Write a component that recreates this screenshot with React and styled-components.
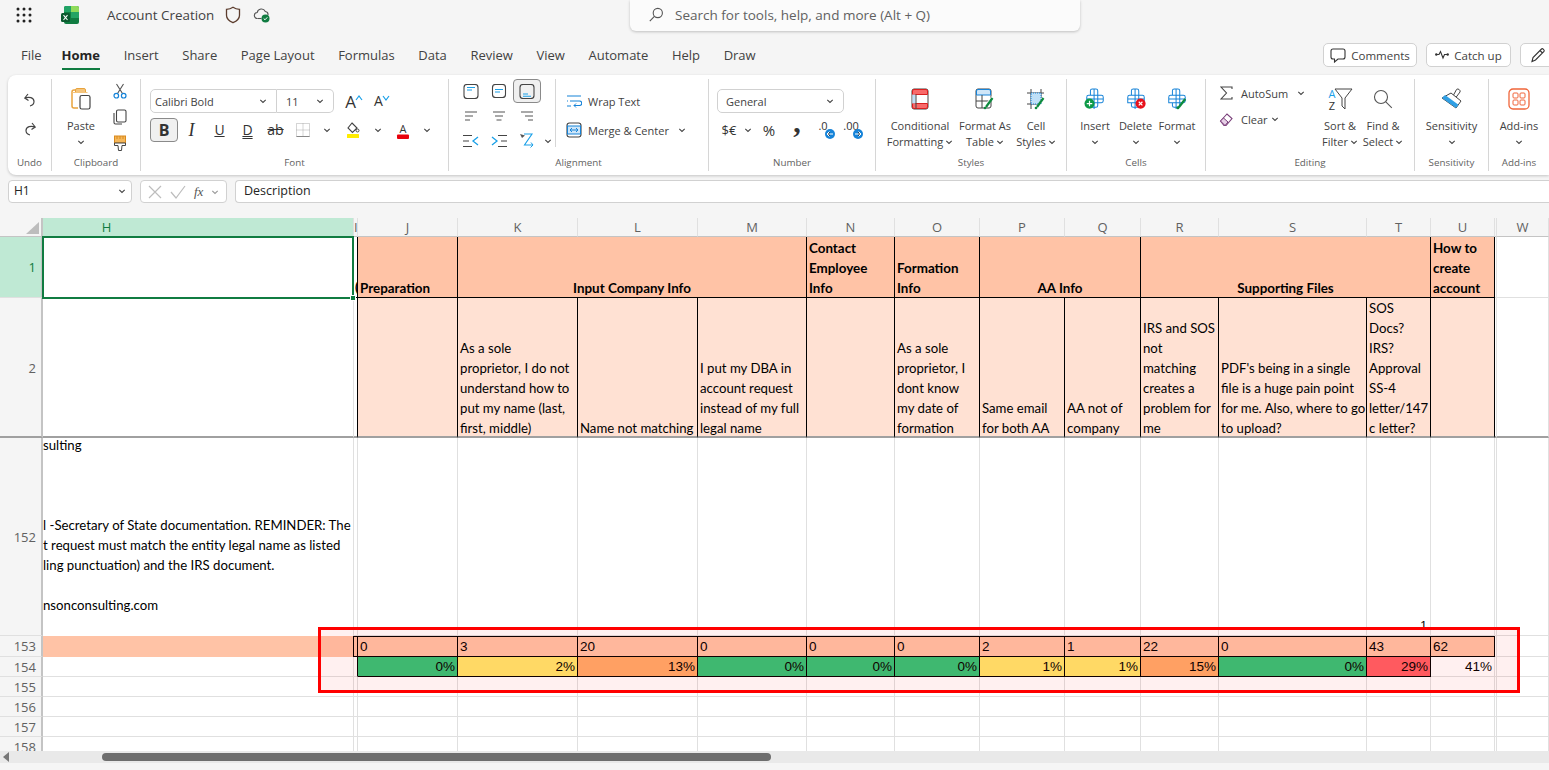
import React from "react";
import styled, { createGlobalStyle } from "styled-components";

const Global = createGlobalStyle`
  html, body { margin: 0; padding: 0; background: #f5f5f5; }
  * { box-sizing: border-box; }
`;
const UI = `"Open Sans", "Noto Sans", sans-serif`;
const SHEET = `"Lato", "Noto Sans", sans-serif`;
const NUM = `"Liberation Sans", Arial, sans-serif`;

const Page = styled.div`
  width: 1549px; height: 770px; overflow: hidden; background: #f5f5f5;
  font-family: ${UI}; color: #424242; display: flex; flex-direction: column;
`;
/* ---------- title bar ---------- */
const TitleBar = styled.header`display: flex; height: 40px; flex: none;`;
const TitleLeft = styled.div`width: 630px; height: 30px; display: flex; align-items: center; padding-left: 16px;`;
const DocName = styled.span`font-size: 13.4px; margin: 0 11px 0 27px; color: #424242; white-space: nowrap;`;
const SearchBox = styled.div`
  width: 450px; height: 31px; background: #fbfbfb; border-radius: 0 0 6px 6px;
  box-shadow: 0 1px 3px rgba(0,0,0,.22); display: flex; align-items: center; padding: 0 0 2px 18px; gap: 11px;
  font-size: 13.5px; color: #616161; white-space: nowrap;
`;
/* ---------- tabs ---------- */
const TabBar = styled.nav`height: 35px; flex: none; display: flex; align-items: flex-start; padding: 3px 38px 0 21px; position: relative;`;
const Tab = styled.div`
  font-size: 13px; line-height: 24px; height: 27px; margin-right: ${p => p.$tight ? 20 : 23.6}px; color: ${p => p.$on ? "#242424" : "#424242"};
  font-weight: ${p => p.$on ? 700 : 400}; border-bottom: ${p => p.$on ? "2px solid #107c41" : "none"}; white-space: nowrap;
`;
const TabActions = styled.div`display: flex; gap: 9px; width: 226px; flex: none; position: absolute; left: 1323px; top: 3px;`;
const PillButton = styled.div`
  height: 24px; flex: none; width: ${p => p.$w}px; background: #fff; border: 1px solid #d1d1d1; border-radius: 5px;
  display: flex; align-items: center; justify-content: ${p => p.$left ? "flex-start" : "center"}; padding-left: ${p => p.$left ? "9px" : "0"}; gap: 5px; font-size: 11.5px; color: #424242;
`;
/* ---------- ribbon ---------- */
const Ribbon = styled.div`
  height: 100px; flex: none; margin-left: 8px; background: #fff; border-radius: 8px 0 0 8px;
  box-shadow: 0 1px 3px rgba(0,0,0,.2); display: flex; overflow: hidden;
`;
const Group = styled.section`
  width: ${p => p.$w}px; flex: none; height: 92px; margin: 4px 0; display: flex; flex-direction: column;
  border-right: ${p => p.$end ? "none" : "1px solid #d6d6d6"};
`;
const GroupBody = styled.div`height: 74px; flex: none; display: flex; padding-left: ${p => p.$pl || 0}px;`;
const GroupLabel = styled.div`height: 18px; line-height: 19px; font-size: 9.8px; text-align: center; color: #616161;`;
const Stack = styled.div`display: flex; flex-direction: column; align-items: center; width: ${p => p.$w ? p.$w + "px" : "100%"}; padding-top: ${p => p.$pt || 0}px; gap: ${p => p.$gap || 0}px; flex: none;`;
const LeftStack = styled(Stack)`align-items: flex-start; margin-left: ${p => p.$ml || 0}px;`;
const Slot = styled.div`
  width: ${p => p.$w || 24}px; height: ${p => p.$h || 24}px; flex: none; display: flex; align-items: center; justify-content: center; gap: ${p => p.$gap || 0}px;
  border: ${p => p.$on ? "1px solid #8a8a8a" : "1px solid transparent"}; border-radius: 4px; background: ${p => p.$on ? "#f0f0f0" : "transparent"};
`;
const Row = styled.div`display: flex; align-items: center; height: 24px; flex: none; margin-top: ${p => p.$mt || 0}px; margin-left: ${p => p.$ml || 0}px;`;
const SmallText = styled.span`font-size: 11px; color: #424242; white-space: nowrap; margin: 0 ${p => p.$mr || 0}px 0 ${p => p.$ml || 0}px;`;
const Big = styled.div`width: ${p => p.$w}px; flex: none; display: flex; flex-direction: column; align-items: center;`;
const BigIcon = styled.div`height: 39px; display: flex; align-items: center; justify-content: center;`;
const BigLabel = styled.div`font-size: 11px; line-height: 16px; text-align: center; white-space: nowrap; color: #424242; display: flex; align-items: center; justify-content: center; gap: 2px; height: 16px;`;
const Combo = styled.div`
  height: 24px; border: 1px solid #d1d1d1; border-left: ${p => p.$joined ? "none" : "1px solid #d1d1d1"}; border-radius: ${p => p.$r || "5px"}; background: #fff; width: ${p => p.$w}px; flex: none;
  display: flex; align-items: center; justify-content: space-between; padding: 0 9px 0 ${p => p.$pl || 4}px; font-size: 11px; color: #424242;
`;
const FontLetter = styled.span`
  font-family: ${p => p.$serif ? `"Liberation Serif", serif` : UI}; font-size: ${p => p.$s || 14}px; font-weight: ${p => p.$b ? 700 : 400}; font-style: ${p => p.$i ? "italic" : "normal"};
  text-decoration: ${p => p.$d || "none"}; color: #333; line-height: 1; padding-bottom: ${p => p.$lift || 0}px;
`;
const CaretTop = styled.span`align-self: flex-start; margin-top: 5px; margin-left: -1px;`;
const AlignGrid = styled.div`
  display: grid; grid-template-columns: 28px 28px 28px 14px; grid-auto-rows: 24px; row-gap: 1px; align-items: center; justify-items: center;
  height: 68px; border-right: 1px solid #d6d6d6; width: 99px; flex: none;
`;
/* ---------- formula bar ---------- */
const FormulaBar = styled.div`height: 23px; flex: none; margin: 5px 0 15px 8px; display: flex; gap: 8px;`;
const NameBox = styled.div`
  width: 124px; flex: none; background: #fff; border: 1px solid #d1d1d1; border-radius: 4px; font-size: 12px; padding: 0 5px 2px; display: flex; align-items: center; justify-content: space-between; color: #242424;
`;
const FxBox = styled.div`width: 87px; flex: none; background: #fff; border: 1px solid #d1d1d1; border-radius: 4px; display: flex; align-items: center; padding-left: 7px; gap: 8px;`;
const FormulaInput = styled.div`flex: 1; background: #fff; border: 1px solid #d1d1d1; border-right: none; border-radius: 4px 0 0 4px; font-size: 12.5px; padding: 0 0 2px 8px; display: flex; align-items: center; color: #242424;`;
/* ---------- sheet ---------- */
const SheetWrap = styled.div`position: relative; height: 533px; overflow: hidden; background: #fff; flex: none;`;
const Sheet = styled.div`
  display: grid;
  grid-template-columns: 43px 311px 4px 100px 120px 120px 109px 88px 85px 85px 76px 78px 148px 64px 64px 2px 52px;
  grid-template-rows: 19px 61px 140px 198px 21px 20px 20px 20px 20px 20px;
  font-family: ${SHEET}; color: #000;
`;
const Corner = styled.div`background: #f5f5f5; border-right: 2px solid #c4c4c4; border-bottom: 1px solid #c4c4c4; display: flex; align-items: flex-end; justify-content: flex-end; padding: 0 2px 2px 0;`;
const ColHead = styled.div`
  background: ${p => p.$on ? "#bfe9d4" : "#f5f5f5"}; color: ${p => p.$on ? "#107c41" : "#616161"}; border-right: 1px solid #e0e0e0; border-bottom: 1px solid #c4c4c4;
  font: 13px/18px ${UI}; text-align: center; overflow: hidden; padding-right: ${p => p.$pr || 0}px;
`;
const RowHead = styled.div`
  background: ${p => p.$on ? "#bfe9d4" : "#f5f5f5"}; color: ${p => p.$on ? "#107c41" : "#616161"}; border-right: 2px solid #c4c4c4;
  border-bottom: ${p => p.$freeze ? "2px solid #a0a0a0" : "1px solid #e0e0e0"}; font: 13px/1 ${UI};
  display: flex; align-items: center; justify-content: flex-end; padding: ${p => p.$freeze ? 2 : 1}px 5px 0 0; overflow: visible;
`;
const Blank = styled.div`
  background: ${p => p.$bg || "#fff"}; border-right: 1px solid ${p => p.$ink ? "#000" : "#e0e0e0"};
  border-bottom: ${p => p.$freeze ? "2px solid #a0a0a0" : "1px solid #e0e0e0"};
  display: flex; align-items: ${p => p.$end ? "flex-end" : "stretch"}; justify-content: flex-end; overflow: hidden;
`;
const Clipped = styled(Blank)`
  justify-content: flex-start; align-items: flex-end; font: 700 13.4px/20px ${SHEET};
  border-bottom-color: #000; padding-left: 1px;
`;
const Selected = styled.div`
  position: relative; z-index: 2; margin: -1px 0 -1px -1px; background: #fff; border: 2px solid #107c41;
`;
const Handle = styled.i`position: absolute; right: -4px; bottom: -4px; background: #107c41; border: 1px solid #fff; box-sizing: content-box; width: 4px; height: 4px;`;
const GroupHead = styled.div`
  grid-column: span ${p => p.$span || 1}; background: #ffc3a6; border-right: 1.6px solid #000; border-bottom: 1.6px solid #000;
  display: flex; flex-direction: column; justify-content: flex-end; padding: 0 2px 0; font: 700 13.4px/20px ${SHEET}; text-align: ${p => p.$c ? "center" : "left"}; white-space: nowrap; overflow: hidden;
`;
const Story = styled.div`
  background: #ffe1d3; border-right: 1.6px solid #000; border-bottom: 2px solid #a0a0a0;
  display: flex; flex-direction: column; justify-content: flex-end; padding: 0 2px; font: 400 13.2px/20px ${SHEET}; white-space: nowrap; overflow: hidden;
`;
const LineStack = styled.div`margin-bottom: ${p => p.$mb || 0}px;`;
const NoteCell = styled.div`
  background: #fff; border-right: 1px solid #e0e0e0; padding: 0 0 0 0; overflow: hidden;
`;
const NoteText = styled.div`font: 400 13.2px/20px ${SHEET}; white-space: pre; margin-top: -3px;`;
const Stray = styled.div`font: 400 12px/14px ${NUM}; padding: 0 3px 2px 0;`;
const Band = styled.div`background: #ffc3a6; border-bottom: 1px solid #ffc3a6;`;
const Count = styled.div`
  background: #ffc3a6; border-top: 1px solid #000; border-right: 1px solid #000; border-bottom: 1px solid #000; border-left: ${p => p.$first ? "1px solid #000" : "none"};
  margin-left: ${p => p.$first ? -1 : 0}px; font: 400 13.5px/20px ${NUM}; padding-left: 2px; overflow: hidden;
`;
const Share = styled.div`
  background: ${p => p.$bg || "#fff"}; border-right: 1px solid ${p => p.$bg ? "#000" : "#e0e0e0"}; border-bottom: 1px solid ${p => p.$bg ? "#000" : "#e0e0e0"};
  font: 400 13.5px/20px ${NUM}; text-align: right; padding-right: 2px; overflow: hidden;
`;
const Highlight = styled.div`
  position: absolute; left: 318px; top: 409px; width: 1202px; height: 66px; border: 3px solid #f00; background: rgba(255,0,0,.06); z-index: 3;
`;
const ScrollBar = styled.div`height: 12px; flex: none; background: #e9e9e9; display: flex; align-items: center; padding-left: 3px;`;
const Thumb = styled.div`width: 669px; height: 8px; border-radius: 4px; background: #6e6e6e; margin-left: 93px;`;
const Spacer = styled.span`width: ${p => p.$w}px; flex: none;`;

/* ---------- icons ---------- */
const S = ({ w = 16, h = 16, vb, children, ...r }) => (
  <svg width={w} height={h} viewBox={vb || `0 0 ${w} ${h}`} fill="none" style={{ display: "block", flex: "none" }} {...r}>{children}</svg>
);
const Chev = ({ c = "#444" }) => <S w={8} h={8}><path d="M1.300 2.800 4 5.500 6.700 2.800" stroke={c} strokeWidth="1.100" /></S>;
const Waffle = () => <S w={16} h={16}>{[2, 8, 14].map(y => [2, 8, 14].map(x => <circle key={x + "-" + y} cx={x} cy={y} r="1.500" fill="#222" />))}</S>;
const ExcelLogo = () => (
  <S w={20} h={20}>
    <rect x="4" y="1" width="15" height="18" rx="2" fill="#107c41" />
    <path d="M11 1h6a2 2 0 0 1 2 2v4h-8z" fill="#8fdb5b" />
    <path d="M4 3a2 2 0 0 1 2-2h5v6H4z" fill="#21a366" />
    <path d="M11 7h8v6h-8z" fill="#33c481" opacity=".55" />
    <rect x="1" y="8" width="9" height="9" rx="1.500" fill="#0b5a2f" />
    <path d="M3.500 10.200 7.500 15M7.500 10.200 3.500 15" stroke="#fff" strokeWidth="1.100" />
  </S>
);
const ShieldIcon = () => <S w={16} h={18}><path d="M8 1.200c2 1.400 4.200 2 6.500 2.100v6c0 3.600-2.800 5.900-6.500 7.400-3.700-1.500-6.500-3.800-6.500-7.400v-6C3.800 3.200 6 2.600 8 1.200z" stroke="#5c3d2e" strokeWidth="1.300" /></S>;
const CloudOk = () => (
  <S w={18} h={16}>
    <path d="M4.500 11.500a3 3 0 0 1-.3-6A4.300 4.300 0 0 1 12.300 4.500 3.200 3.200 0 0 1 15 8" stroke="#555" strokeWidth="1.100" />
    <path d="M4.500 11.500h4" stroke="#555" strokeWidth="1.100" />
    <circle cx="12.500" cy="11.500" r="4" fill="#107c41" />
    <path d="m10.700 11.500 1.300 1.300 2.300-2.500" stroke="#fff" strokeWidth="1" />
  </S>
);
const SearchI = () => <S w={16} h={16}><circle cx="9.800" cy="6" r="4.600" stroke="#555" strokeWidth="1.100" /><path d="M6.400 9.400 1.800 14.200" stroke="#555" strokeWidth="1.100" /></S>;
const CommentI = () => <S w={16} h={16}><path d="M3 2h10a2 2 0 0 1 2 2v6a2 2 0 0 1-2 2H8l-3.500 3v-3H3a2 2 0 0 1-2-2V4a2 2 0 0 1 2-2z" stroke="#333" strokeWidth="1.100" /></S>;
const PulseI = () => <S w={14} h={12}><circle cx="1.300" cy="5.500" r="1.200" fill="#333" /><circle cx="12.700" cy="5.500" r="1.200" fill="#333" /><path d="M2 5.500h2l1.500-3 2.500 6.500 1.500-3.500H12" stroke="#333" strokeWidth="1.100" /></S>;
const PencilI = () => <S w={16} h={16}><path d="M2 14.500 3 10.500 11.500 2c1-1 3.500 1.200 2.500 2.500L5.500 13z M10 3.500l2.500 2.500" stroke="#333" strokeWidth="1.100" /></S>;
const UndoI = () => <S w={16} h={16}><path d="M6 2 2.800 6 6.500 8.500M3 6c4-1.500 9-.5 9 3.500 0 2.500-2 4-4 4.500" stroke="#444" strokeWidth="1.200" /></S>;
const RedoI = () => <S w={16} h={16}><path d="M10 2 13.200 6 9.500 8.500M13 6C9 4.500 4 5.500 4 9.500c0 2.500 2 4 4 4.500" stroke="#444" strokeWidth="1.200" /></S>;
const PasteI = () => (
  <S w={24} h={24}>
    <path d="M8 3H5a2 2 0 0 0-2 2v14a2 2 0 0 0 2 2h4" stroke="#e8a33d" strokeWidth="1.500" />
    <path d="M8 1.500h7a1.500 1.500 0 0 1 1.500 1.500v2.500H6.500V3A1.500 1.500 0 0 1 8 1.500z" fill="#f5c57c" stroke="#e8a33d" />
    <path d="M3.500 5.500h15" stroke="#f5c57c" />
    <rect x="11" y="8.500" width="10" height="13.500" rx="1.800" stroke="#444" strokeWidth="1.200" fill="#fff" />
  </S>
);
const ScissorsI = () => <S w={14} h={16}><path d="M3.500 1 9.500 10.500M10.500 1 4.500 10.500" stroke="#555" strokeWidth="1.100" /><circle cx="3.300" cy="12.700" r="2.300" stroke="#1683d8" strokeWidth="1.200" /><circle cx="10.700" cy="12.700" r="2.300" stroke="#1683d8" strokeWidth="1.200" /></S>;
const CopyI = () => <S w={14} h={16}><rect x="3.500" y="1" width="9.500" height="12" rx="1.500" stroke="#444" strokeWidth="1.100" /><path d="M1 4v9.500A1.500 1.500 0 0 0 2.500 15H9" stroke="#444" strokeWidth="1.100" /></S>;
const PainterI = () => <S w={14} h={17}><rect x="1.500" y="1" width="11" height="7" fill="#f5b759" stroke="#d98a1f" /><path d="M1.500 8h11v2.500H9L8.500 15.500h-3L5 10.500H1.500z" fill="#fff" stroke="#444" /><path d="M4 1v3M7 1v3M10 1v3" stroke="#d98a1f" /></S>;
const CaretUp = ({ c = "#1aa0e8", down }) => <S w={8} h={6}><path d={down ? "M1 1 4 5 7 1" : "M1 5 4 1 7 5"} stroke={c} strokeWidth="1.200" /></S>;
const BorderI = () => <S w={14} h={14}><path d="M.5.500h13v13H.5zM7 .500v13M.5 7h13" stroke="#aaa" strokeDasharray="1 1" /><path d="M.5 13.500h13" stroke="#888" /></S>;
const FillI = () => <S w={14} h={16}><path d="m6 1 5 5-4.500 4.500L2 6z" stroke="#444" strokeWidth="1.100" /><circle cx="11.500" cy="8.500" r="1.500" stroke="#444" /><rect x="1" y="12" width="12" height="4" rx=".5" fill="#ffec00" /></S>;
const FontColorI = () => (
  <svg width="14" height="17" viewBox="0 0 14 17" style={{ display: "block" }}>
    <text x="7" y="11" fontSize="11" textAnchor="middle" fill="#333" fontFamily="Open Sans">A</text>
    <rect x="1" y="12.500" width="12" height="4.500" rx="1" fill="#e8000b" />
  </svg>
);
const VAlign = ({ pos }) => (
  <S w={16} h={pos === "mid" ? 14 : 15}>
    <rect x={pos === "mid" ? 1.500 : 1} y=".5" width={pos === "mid" ? 13 : 14} height={pos === "mid" ? 13 : 14} rx="3" stroke="#444" strokeWidth="1.100" />
    <path d={pos === "top" ? "M4 3.500h8M4 6h5" : pos === "mid" ? "M4 5.500h8M4 8h5" : "M4 10h5M4 12.200h8"} stroke="#1aa0e8" strokeWidth="1.100" />
  </S>
);
const HAlign = ({ d }) => <S w={14} h={12}><path d={d} stroke="#555" strokeWidth="1.100" /></S>;
const Indent = ({ out }) => <S w={18} h={14}>{out
  ? <><path d="M1 1.500h9M1 7h6M1 12.500h9" stroke="#444" strokeWidth="1.100" /><path d="M16 3 11 7l5 4" stroke="#1aa0e8" strokeWidth="1.300" /></>
  : <><path d="M2 3l5 4-5 4" stroke="#1aa0e8" strokeWidth="1.300" /><path d="M8 1.500h9M11 7h6M8 12.500h9" stroke="#444" strokeWidth="1.100" /></>}</S>;
const OrientI = () => <S w={16} h={18}><path d="M1 2l5 1.500L3 6z" fill="#555" /><path d="M5 2h8L5.500 13H14" stroke="#1aa0e8" strokeWidth="1.100" /><path d="m12 10.500 2 2.500-2.500 2.500" stroke="#1aa0e8" /></S>;
const WrapI = () => <S w={16} h={14}><path d="M1 2h14M4 7h9.500a2 2 0 0 1 0 4.500H8M1 12h4M1 7h1" stroke="#1683d8" strokeWidth="1.100" /><path d="M10 9.500 8 11.500l2 2" stroke="#1683d8" /></S>;
const MergeI = () => <S w={16} h={16}><rect x="1" y="1" width="14" height="14" rx="2.500" stroke="#444" strokeWidth="1.100" /><rect x="1.500" y="4" width="13" height="8" fill="#cfe6f8" stroke="#1683d8" /><path d="M4 8h8M6 6 4 8l2 2M10 6l2 2-2 2" stroke="#1683d8" /></S>;
const Decimal = ({ t, right }) => (
  <svg width="24" height="22" viewBox="0 0 24 22" style={{ display: "block" }}>
    <text x="9" y="11" fontSize="11" textAnchor="middle" fill="#333" fontFamily="Open Sans">{t}</text>
    <circle cx="16" cy="15" r="5" fill="#1683d8" />
    <path d={right ? "M13 15h6M16.500 12.500l2.500 2.500-2.500 2.500" : "M19 15h-6M15.500 12.500L13 15l2.500 2.500"} stroke="#fff" />
  </svg>
);
const CondI = () => <S w={18} h={22}><rect x="1" y="1" width="16" height="20" rx="2" fill="#fff" stroke="#444" /><path d="M1.500 3a1.500 1.500 0 0 1 1.500-1.500h12A1.500 1.500 0 0 1 16.500 3v3.500h-15zM1.500 15.500h15V19a1.500 1.500 0 0 1-1.500 1.500H3A1.500 1.500 0 0 1 1.500 19z" fill="#f86a6a" stroke="#d92020" /><rect x="1.500" y="6.500" width="3" height="9" fill="#bfe0f7" /><path d="M5 6.500v14" stroke="#444" /></S>;
const TableI = () => <S w={20} h={22}><rect x="1" y="1" width="15" height="19" rx="2" stroke="#444" /><path d="M1.500 3A1.500 1.500 0 0 1 3 1.500h11A1.500 1.500 0 0 1 15.500 3v4h-14z" fill="#cfe6f8" stroke="#1683d8" /><path d="M1 13h15M7 7v13" stroke="#444" /><path d="M9 20l1.500-4L17 8l2 1.500-7 8z" fill="#fff" /><path d="M11 19l6.500-9" stroke="#0e8a3e" strokeWidth="2.200" /><circle cx="10" cy="20" r="1.300" fill="#0e8a3e" /></S>;
const StyleI = () => <S w={20} h={22}><path d="M5 1v20M15 1v9M1 5h17M1 16h10" stroke="#444" /><rect x="5" y="5" width="10" height="11" fill="#bfe0f7" stroke="#1683d8" strokeDasharray="1 1" /><path d="M11 19l6.500-9" stroke="#0e8a3e" strokeWidth="2.200" /><circle cx="10" cy="20" r="1.300" fill="#0e8a3e" /></S>;
const CellCross = () => <path d="M7 8V3a2 2 0 0 1 2-2h4a2 2 0 0 1 2 2v5h4a2 2 0 0 1 2 2v4a2 2 0 0 1-2 2h-4v3a2 2 0 0 1-2 2H9a2 2 0 0 1-2-2v-3H3V10a2 2 0 0 1 2-2zM7 8h8v8H7M11 1v22M3 12h18" stroke="#1683d8" strokeWidth="1.100" />;
const InsertI = () => <S w={22} h={22} vb="0 0 24 24"><CellCross /><circle cx="6" cy="17" r="5.500" fill="#0e9a47" /><path d="M6 14v6M3 17h6" stroke="#fff" strokeWidth="1.300" /></S>;
const DeleteI = () => <S w={22} h={22} vb="0 0 24 24"><CellCross /><circle cx="17" cy="17" r="5.500" fill="#e8111b" /><path d="m15 15 4 4M19 15l-4 4" stroke="#fff" strokeWidth="1.300" /></S>;
const FormatI = () => <S w={22} h={22} vb="0 0 24 24"><CellCross /><path d="M14 21 21 12" stroke="#0e8a3e" strokeWidth="2.500" /><circle cx="13" cy="21.500" r="1.700" fill="#0e8a3e" /></S>;
const SigmaT = () => <S w={13} h={14}><path d="M12 3V1H1l5.500 6L1 13h11v-2" stroke="#444" strokeWidth="1.100" /></S>;
const EraserI = () => <S w={14} h={14}><path d="M1.500 9 8 2l5 4.500L7 13.500H5z" stroke="#7a3f7a" strokeWidth="1.100" /><path d="M1.500 9 6 13.500 9 10 4.500 6z" fill="#e6cfe6" stroke="#7a3f7a" /></S>;
const SortI = () => (
  <svg width="26" height="26" viewBox="0 0 26 26" style={{ display: "block" }}>
    <text x="5" y="12" fontSize="11" textAnchor="middle" fill="#1aa0e8" fontFamily="Open Sans">A</text>
    <text x="5" y="24" fontSize="11" textAnchor="middle" fill="#333" fontFamily="Open Sans">Z</text>
    <path d="M8 3h17l-7 9v11l-3-3v-8z" stroke="#444" fill="#fff" />
  </svg>
);
const FindI = () => <S w={20} h={20}><circle cx="8" cy="8" r="6.500" stroke="#555" strokeWidth="1.100" /><path d="m12.800 12.800 6 6" stroke="#555" strokeWidth="1.100" /></S>;
const SensI = () => <S w={24} h={24}><path d="M13 9 16.500 2.500c1-1.500 4.500.5 3.500 2.500L15.500 11z" stroke="#444" fill="#fff" /><path d="M11 6l10 8-5 7L2 11z" fill="#fff" stroke="#444" /><path d="M2 11l14 10 2.500-3.300L5 8z" fill="#2f9fe4" /></S>;
const AddinsI = () => <S w={22} h={22}><rect x="1" y="1" width="20" height="20" rx="4" stroke="#f0653a" strokeWidth="1.300" /><rect x="5" y="5" width="5" height="5" rx="1" stroke="#f0653a" /><rect x="12" y="5" width="5" height="5" rx="1" stroke="#f0653a" /><rect x="5" y="12" width="5" height="5" rx="1" stroke="#f0653a" /><rect x="12" y="12" width="5" height="5" rx="1" stroke="#f0653a" /></S>;
const XI = () => <S w={14} h={14}><path d="m1 1 12 12M13 1 1 13" stroke="#bdbdbd" strokeWidth="1.200" /></S>;
const CheckI = () => <S w={16} h={14}><path d="m1 7 5 6L15 1" stroke="#bdbdbd" strokeWidth="1.200" /></S>;
const FxText = styled.span`font: italic 13px "Liberation Serif", serif; color: #555;`;
const CornerMark = () => <S w={13} h={12}><path d="M13 0v12H0z" fill="#bdbdbd" /></S>;

/* ---------- data ---------- */
const tabs = ["File", "Home", "Insert", "Share", "Page Layout", "Formulas", "Data", "Review", "View", "Automate", "Help", "Draw"];
const cols = ["H", "I", "J", "K", "L", "M", "N", "O", "P", "Q", "R", "S", "T", "U", "", "W"];
const stories = [
  [],
  ["As a sole", "proprietor, I do not", "understand how to", "put my name (last,", "first, middle)"],
  ["Name not matching"],
  ["I put my DBA in", "account request", "instead of my full", "legal name"],
  [],
  ["As a sole", "proprietor, I", "dont know", "my date of", "formation"],
  ["Same email", "for both AA"],
  ["AA not of", "company"],
  ["IRS and SOS", "not", "matching", "creates a", "problem for", "me"],
  ["PDF's being in a single", "file is a huge pain point", "for me. Also, where to go", "to upload?"],
  ["SOS", "Docs?", "IRS?", "Approval", "SS-4", "letter/147", "c letter?"],
  [],
];
const note = "sulting\n\n\n\nl -Secretary of State documentation. REMINDER: The\nt request must match the entity legal name as listed\nling punctuation) and the IRS document.\n\nnsonconsulting.com";
const counts = ["0", "3", "20", "0", "0", "0", "2", "1", "22", "0", "43", "62"];
const G = "#34c477", Y = "#ffe76c", O = "#ffaa6a", R = "#ff6065";
const shares = [["0%", G], ["2%", Y], ["13%", O], ["0%", G], ["0%", G], ["0%", G], ["1%", Y], ["1%", Y], ["15%", O], ["0%", G], ["29%", R], ["41%", null]];
const Lines = ({ l, mb }) => <LineStack $mb={mb}>{l.map(t => <div key={t}>{t}</div>)}</LineStack>;
const blanks = n => Array.from({ length: n }, (_, i) => i);

const BigBtn = ({ w, icon, l1, l2, chev2 }) => (
  <Big $w={w}>
    <BigIcon>{icon}</BigIcon>
    <BigLabel>{l1}</BigLabel>
    <BigLabel>{l2}{chev2 && <Chev />}</BigLabel>
  </Big>
);

export default function App() {
  return (
    <Page>
      <Global />
      <TitleBar>
        <TitleLeft>
          <Waffle />
          <Spacer $w={28} />
          <ExcelLogo />
          <DocName>Account Creation</DocName>
          <ShieldIcon />
          <Spacer $w={12} />
          <CloudOk />
        </TitleLeft>
        <SearchBox><SearchI />Search for tools, help, and more (Alt + Q)</SearchBox>
      </TitleBar>
      <TabBar>
        {tabs.map(t => <Tab key={t} $on={t === "Home"} $tight={t === "File"}>{t}</Tab>)}
        <TabActions>
          <PillButton $w={94}><CommentI />Comments</PillButton>
          <PillButton $w={85}><PulseI />Catch up</PillButton>
          <PillButton $w={40} $left><PencilI /></PillButton>
        </TabActions>
      </TabBar>

      <Ribbon>
        <Group $w={44}>
          <GroupBody>
            <Stack $pt={9} $gap={5}><Slot><UndoI /></Slot><Slot><RedoI /></Slot></Stack>
          </GroupBody>
          <GroupLabel>Undo</GroupLabel>
        </Group>

        <Group $w={89}>
          <GroupBody>
            <Stack $w={58}>
              <BigIcon><PasteI /></BigIcon>
              <BigLabel>Paste</BigLabel>
              <BigLabel><Chev /></BigLabel>
            </Stack>
            <Stack $w={20} $gap={2}>
              <Slot $w={20}><ScissorsI /></Slot>
              <Slot $w={20}><CopyI /></Slot>
              <Slot $w={20}><PainterI /></Slot>
            </Stack>
          </GroupBody>
          <GroupLabel>Clipboard</GroupLabel>
        </Group>

        <Group $w={308}>
          <GroupBody $pl={9}>
            <LeftStack $pt={10} $w={290}>
              <Row>
                <Combo $w={127} $r="5px 0 0 5px">Calibri Bold<Chev /></Combo>
                <Combo $w={57} $joined $pl={9} $r="0 5px 5px 0">11<Chev /></Combo>
                <Spacer $w={6} />
                <Slot $w={28}><FontLetter $s={17}>A</FontLetter><CaretTop><CaretUp /></CaretTop></Slot>
                <Slot $w={28}><FontLetter $s={14}>A</FontLetter><CaretTop><CaretUp down /></CaretTop></Slot>
              </Row>
              <Row $mt={5}>
                <Slot $w={28} $on><FontLetter $b $s={16}>B</FontLetter></Slot>
                <Slot $w={27}><FontLetter $i $serif $s={18}>I</FontLetter></Slot>
                <Slot $w={29}><FontLetter $d="underline" $s={14}>U</FontLetter></Slot>
                <Slot $w={27}><FontLetter $d="underline double" $s={14}>D</FontLetter></Slot>
                <Slot $w={29}><FontLetter $d="line-through" $s={14}>ab</FontLetter></Slot>
                <Slot $w={26}><BorderI /></Slot>
                <Slot $w={22}><Chev /></Slot>
                <Slot $w={29}><FillI /></Slot>
                <Slot $w={21}><Chev /></Slot>
                <Slot $w={30}><FontColorI /></Slot>
                <Slot $w={18}><Chev /></Slot>
              </Row>
            </LeftStack>
          </GroupBody>
          <GroupLabel>Font</GroupLabel>
        </Group>

        <Group $w={260}>
          <GroupBody $pl={8}>
            <AlignGrid>
              <VAlign pos="top" /><VAlign pos="mid" /><Slot $w={28} $on><VAlign pos="bot" /></Slot><span />
              <HAlign d="M1 2h12M1 6h8M1 10h5" /><HAlign d="M1 2h12M3 6h8M4.500 10h5" /><HAlign d="M1 2h12M5 6h8M8 10h5" /><span />
              <Indent out /><Indent /><OrientI /><Chev />
            </AlignGrid>
            <LeftStack $pt={10} $w={140} $gap={5} $ml={10}>
              <Row><WrapI /><SmallText $ml={6}>Wrap Text</SmallText></Row>
              <Row><MergeI /><SmallText $ml={6} $mr={9}>Merge &amp; Center</SmallText><Chev /></Row>
            </LeftStack>
          </GroupBody>
          <GroupLabel>Alignment</GroupLabel>
        </Group>

        <Group $w={167}>
          <GroupBody $pl={8}>
            <LeftStack $pt={10} $gap={5} $w={155}>
              <Combo $w={127} $pl={8}>General<Chev /></Combo>
              <Row>
                <Slot $w={24}><FontLetter $s={13}>$€</FontLetter></Slot>
                <Slot $w={14}><Chev /></Slot>
                <Slot $w={28}><FontLetter $s={15}>%</FontLetter></Slot>
                <Slot $w={28}><FontLetter $b $serif $s={30} $lift={16}>,</FontLetter></Slot>
                <Slot $w={29}><Decimal t=".0" /></Slot>
                <Slot $w={28}><Decimal t=".00" right /></Slot>
              </Row>
            </LeftStack>
          </GroupBody>
          <GroupLabel>Number</GroupLabel>
        </Group>

        <Group $w={191}>
          <GroupBody $pl={10}>
            <BigBtn w={68} icon={<CondI />} l1="Conditional" l2="Formatting" chev2 />
            <BigBtn w={62} icon={<TableI />} l1="Format As" l2="Table" chev2 />
            <BigBtn w={40} icon={<StyleI />} l1="Cell" l2="Styles" chev2 />
          </GroupBody>
          <GroupLabel>Styles</GroupLabel>
        </Group>

        <Group $w={139}>
          <GroupBody $pl={8}>
            <BigBtn w={40} icon={<InsertI />} l1="Insert" l2={<Chev />} />
            <BigBtn w={41} icon={<DeleteI />} l1="Delete" l2={<Chev />} />
            <BigBtn w={42} icon={<FormatI />} l1="Format" l2={<Chev />} />
          </GroupBody>
          <GroupLabel>Cells</GroupLabel>
        </Group>

        <Group $w={209}>
          <GroupBody>
            <LeftStack $w={112} $pt={2} $gap={2}>
              <Row $ml={10}><Slot $w={20}><SigmaT /></Slot><SmallText $ml={5} $mr={9}>AutoSum</SmallText><Chev /></Row>
              <Row $ml={10}><Slot $w={20}><EraserI /></Slot><SmallText $ml={5} $mr={3}>Clear</SmallText><Chev /></Row>
            </LeftStack>
            <BigBtn w={44} icon={<SortI />} l1="Sort &" l2="Filter" chev2 />
            <BigBtn w={42} icon={<FindI />} l1="Find &" l2="Select" chev2 />
          </GroupBody>
          <GroupLabel>Editing</GroupLabel>
        </Group>

        <Group $w={74}>
          <GroupBody><BigBtn w={73} icon={<SensI />} l1="Sensitivity" l2={<Chev />} /></GroupBody>
          <GroupLabel>Sensitivity</GroupLabel>
        </Group>

        <Group $w={60} $end>
          <GroupBody><BigBtn w={60} icon={<AddinsI />} l1="Add-ins" l2={<Chev />} /></GroupBody>
          <GroupLabel>Add-ins</GroupLabel>
        </Group>
      </Ribbon>

      <FormulaBar>
        <NameBox>H1<Chev /></NameBox>
        <FxBox><XI /><CheckI /><FxText>fx</FxText><Chev c="#999" /></FxBox>
        <FormulaInput>Description</FormulaInput>
      </FormulaBar>

      <SheetWrap>
        <Sheet>
          <Corner><CornerMark /></Corner>
          {cols.map((c, i) => <ColHead key={i} $on={c === "H"} $pr={c === "H" ? 183 : 0}>{c}</ColHead>)}

          <RowHead $on>1</RowHead>
          <Selected><Handle /></Selected>
          <Clipped $ink>(</Clipped>
          <GroupHead><Lines l={["Preparation"]} mb={-1} /></GroupHead>
          <GroupHead $span={3} $c><Lines l={["Input Company Info"]} mb={-1} /></GroupHead>
          <GroupHead><Lines l={["Contact", "Employee", "Info"]} mb={-1} /></GroupHead>
          <GroupHead><Lines l={["Formation", "Info"]} mb={-1} /></GroupHead>
          <GroupHead $span={2} $c><Lines l={["AA Info"]} mb={-1} /></GroupHead>
          <GroupHead $span={3} $c><Lines l={["Supporting Files"]} mb={-1} /></GroupHead>
          <GroupHead><Lines l={["How to", "create", "account"]} mb={-1} /></GroupHead>
          <Blank /><Blank />

          <RowHead $freeze>2</RowHead>
          <Blank $freeze />
          <Blank $ink $freeze />
          {stories.map((s, i) => <Story key={i}><Lines l={s} mb={-2} /></Story>)}
          <Blank $freeze /><Blank $freeze />

          <RowHead>152</RowHead>
          <NoteCell><NoteText>{note}</NoteText></NoteCell>
          {blanks(15).map(i => i === 11
            ? <Blank key={i} $end><Stray>1</Stray></Blank>
            : <Blank key={i} />)}

          <RowHead>153</RowHead>
          <Band />
          <Count $first />
          {counts.map((c, i) => <Count key={i}>{c}</Count>)}
          <Blank /><Blank />

          <RowHead>154</RowHead>
          <Blank />
          <Blank $ink />
          {shares.map(([t, bg], i) => <Share key={i} $bg={bg}>{t}</Share>)}
          <Blank /><Blank />

          {[155, 156, 157, 158].map(n => (
            <React.Fragment key={n}>
              <RowHead>{n}</RowHead>
              {blanks(16).map(i => <Blank key={i} />)}
            </React.Fragment>
          ))}
        </Sheet>
        <Highlight />
      </SheetWrap>
      <ScrollBar>
        <S w={6} h={10}><path d="M6 0v10L0 5z" fill="#777" /></S>
        <Thumb />
      </ScrollBar>
    </Page>
  );
}
